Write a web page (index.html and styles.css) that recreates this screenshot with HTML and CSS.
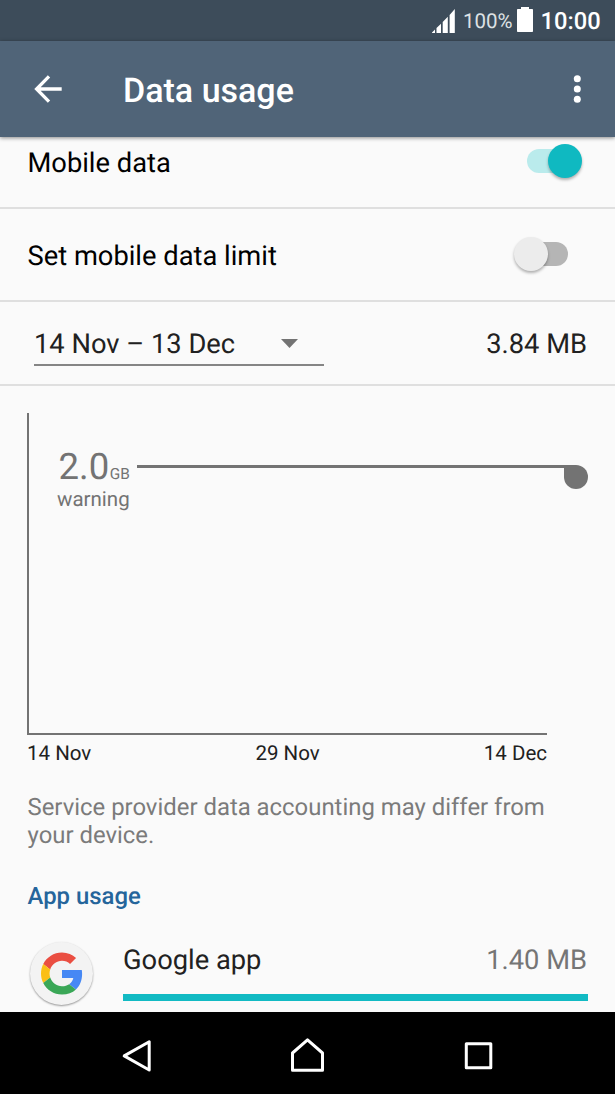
FILE: index.html
```html
<!DOCTYPE html>
<html lang="en">
<head>
<meta charset="utf-8">
<title>Data usage</title>
<link rel="stylesheet" href="styles.css">
</head>
<body>
<div class="screen">
  <div class="status-bar">
    <svg class="signal" width="24" height="25" viewBox="0 0 24 25" fill="#fff"><path d="M1 25V24.400L4 21.500V25ZM5.500 25V20L10 15.700V25ZM11.700 25V14L16.800 8.800V25ZM18.600 25V7L23.800 1V25Z"/></svg>
    <span class="battery-level">100%</span>
    <svg class="battery" width="16" height="25" viewBox="0 0 16 25" fill="#fff"><path d="M4 0h8v2h3.200q.8 0 .8.800V24.200q0 .8-.8.800H.8q-.8 0-.8-.8V2.800Q0 2 .8 2H4z"/></svg>
    <span class="clock">10:00</span>
  </div>
  <header class="app-bar">
    <svg class="back" width="28" height="28" viewBox="0 0 28 28" fill="none" stroke="#fff" stroke-width="3.300"><path d="M27.700 14H3M15 1.400L2.600 14L15 26.600"/></svg>
    <h1 class="title">Data usage</h1>
    <svg class="more" width="8" height="28" viewBox="0 0 8 28" fill="#fff"><circle cx="4.300" cy="3.700" r="3.500"/><circle cx="4.300" cy="14" r="3.500"/><circle cx="4.300" cy="24.300" r="3.500"/></svg>
  </header>
  <main class="content">
    <div class="row row-mobile">
      <span class="label">Mobile data</span>
      <span class="switch switch-on"><span class="thumb"></span></span>
    </div>
    <div class="row row-limit">
      <span class="label">Set mobile data limit</span>
      <span class="switch switch-off"><span class="thumb"></span></span>
    </div>
    <div class="row row-cycle">
      <div class="spinner">
        <span class="period">14 Nov – 13 Dec</span>
        <svg class="caret" width="18" height="9" viewBox="0 0 18 9" fill="#737373"><path d="M0 0h17L8.500 9z"/></svg>
      </div>
      <span class="total">3.84 MB</span>
    </div>
    <section class="chart">
      <div class="plot">
        <div class="warning">
          <div class="warning-text">
            <div class="warning-value">2.0<span class="unit">GB</span></div>
            <div class="warning-label">warning</div>
          </div>
          <div class="warning-line"><span class="handle"></span></div>
        </div>
      </div>
      <div class="axis"><span>14 Nov</span><span>29 Nov</span><span>14 Dec</span></div>
    </section>
    <p class="note">Service provider data accounting may differ from your device.</p>
    <h2 class="section-title">App usage</h2>
    <div class="app">
      <div class="app-icon">
        <svg width="42" height="43" viewBox="0 0 48 48"><path fill="#ea4e41" d="M24 9.500c3.540 0 6.710 1.220 9.210 3.600l6.850-6.850C35.900 2.380 30.470 0 24 0 14.620 0 6.510 5.380 2.560 13.220l7.980 6.190C12.430 13.720 17.740 9.500 24 9.500z"/><path fill="#4688f4" d="M46.980 24.550c0-1.570-.15-3.090-.38-4.550H24v9.020h12.940c-.58 2.960-2.260 5.480-4.780 7.180l7.730 6c4.510-4.180 7.090-10.360 7.090-17.650z"/><path fill="#fbbf16" d="M10.530 28.590c-.48-1.450-.76-2.990-.76-4.590s.27-3.140.76-4.590l-7.980-6.190C.92 16.460 0 20.120 0 24c0 3.880.92 7.540 2.560 10.780l7.970-6.190z"/><path fill="#3aa757" d="M24 48c6.480 0 11.930-2.130 15.890-5.810l-7.730-6c-2.150 1.450-4.920 2.300-8.160 2.300-6.260 0-11.570-4.220-13.470-9.910l-7.980 6.190C6.510 42.620 14.620 48 24 48z"/></svg>
      </div>
      <div class="app-body">
        <div class="app-line"><span>Google app</span><span class="app-size">1.40 MB</span></div>
        <div class="progress"></div>
      </div>
    </div>
  </main>
  <nav class="nav-bar">
    <svg width="36" height="36" viewBox="0 0 36 36"><path d="M6.200 18.900L31.200 4.700V33Z"/></svg>
    <svg width="36" height="36" viewBox="0 0 36 36"><path d="M2.500 33.200V16L17.500 2.800L32.500 16V33.200Z"/></svg>
    <svg width="36" height="36" viewBox="0 0 36 36"><rect x="5.300" y="6.800" width="24.500" height="24"/></svg>
  </nav>
</div>
</body>
</html>
```
FILE: styles.css
```css
* { box-sizing: border-box; }
body { margin: 0; background: #fafafa; font-family: Roboto, sans-serif; text-rendering: geometricPrecision; }
.screen { width: 615px; height: 1094px; display: flex; flex-direction: column; overflow: hidden; }
.status-bar { height: 41px; flex: none; background: #3d4c5a; display: flex; align-items: flex-start; padding-left: 431px; color: #fff; white-space: nowrap; }
.signal { margin-top: 8px; flex: none; }
.battery-level { margin-left: 8px; width: 54px; font-size: 20.500px; line-height: 44px; color: #dde1e4; }
.battery { margin-top: 7px; flex: none; }
.clock { margin-left: 7.500px; font-size: 23.700px; font-weight: 500; line-height: 43px; }
.app-bar { height: 96px; flex: none; background: #506478; display: flex; align-items: center; position: relative; z-index: 1; padding: 0 34px; box-shadow: 0 1px 4px rgba(0,0,0,.45); color: #fff; }
.back { flex: none; }
.title { margin: 3px 0 0 61px; flex: 1; font-size: 34px; line-height: 40px; font-weight: 500; }
.content { height: 875px; flex: none; }
.row { display: flex; justify-content: space-between; align-items: center; border-bottom: 2px solid #dfdfdf; padding: 0 27px; font-size: 27.300px; color: #000; }
.label { padding: 4px 0 0 .5px; }
.row-mobile { height: 72px; padding-bottom: 22px; }
.row-limit { height: 93px; padding-bottom: 1px; }
.row-cycle { height: 84px; color: #212121; padding: 0 28px 0 34px; }
.switch { width: 41px; height: 24px; border-radius: 12px; display: flex; align-items: center; }
.switch-on { background: #baebec; justify-content: flex-end; margin-right: 20px; }
.switch-off { background: #b5b5b5; margin-right: 20px; }
.thumb { width: 34px; height: 34px; flex: none; border-radius: 50%; box-shadow: 0 2px 3px rgba(0,0,0,.3); }
.switch-on .thumb { background: #0fb9c1; margin-right: -13.500px; }
.switch-off .thumb { background: #ececec; margin-left: -13.500px; }
.spinner { width: 290px; height: 45px; border-bottom: 2px solid #858585; display: flex; align-items: center; }
.period { width: 247px; padding-top: 4px; }
.caret { margin-top: 3px; }
.total { padding-top: 2px; }
.chart { padding: 27px 27px 0; }
.plot { width: 520px; height: 322px; border-left: 2px solid #737373; border-bottom: 2px solid #737373; padding: 33px 0 0 28px; }
.warning { width: 531px; display: flex; color: #737373; }
.warning-text { width: 80px; flex: none; }
.warning-value { height: 40px; font-size: 36.500px; line-height: 42px; white-space: nowrap; padding-left: 1.500px; }
.unit { font-size: 15.400px; margin-left: .5px; }
.warning-label { font-size: 20.500px; line-height: 25px; margin-top: 2px; }
.warning-line { flex: 1; height: 3px; background: linear-gradient(#737373, #737373) no-repeat 0 0 / calc(100% - 12px) 100%; margin-top: 19px; display: flex; justify-content: flex-end; }
.handle { width: 24px; height: 24px; flex: none; background: #737373; border-radius: 0 12px 12px 12px; }
.axis { width: 520px; height: 36px; display: flex; justify-content: space-between; line-height: 38px; font-size: 20.500px; color: #212121; }
.note { margin: 22px 27px 0 27.500px; font-size: 23.900px; line-height: 28px; color: #7b7b7b; }
.section-title { margin: 32px 27px 0 27.500px; font-size: 23.900px; line-height: 30px; font-weight: 500; color: #25659b; }
.app { display: flex; padding: 31px 27px 0 30px; }
.app-icon { width: 63px; height: 63px; flex: none; border-radius: 50%; background: #f3f3f3; box-shadow: 0 1px 2px rgba(0,0,0,.4); display: flex; align-items: center; justify-content: center; }
.app-body { margin-left: 30px; flex: 1; }
.app-line { display: flex; justify-content: space-between; font-size: 27.300px; line-height: 36px; color: #212121; }
.app-size { color: #757575; padding-right: 1px; }
.progress { height: 7px; margin-top: 16px; background: #12bac3; }
.nav-bar { height: 82px; flex: none; background: #000; display: flex; justify-content: space-between; padding: 25px 118px 0; }
.nav-bar svg { fill: none; stroke: #fff; stroke-width: 3; stroke-linejoin: round; }
```
